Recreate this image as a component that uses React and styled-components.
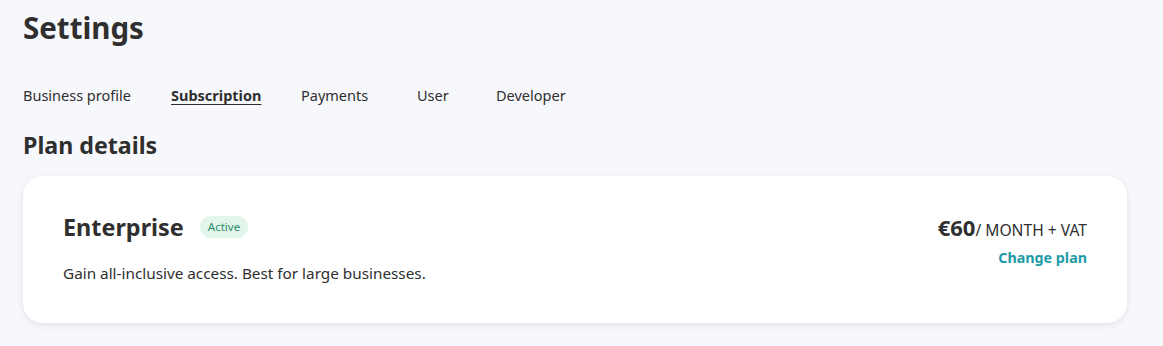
import styled, { createGlobalStyle } from "styled-components";

const GlobalStyle = createGlobalStyle`
  body {
    margin: 0;
    background: #f7f8fb;
    font-family: "Noto Sans", "Open Sans", sans-serif;
    color: #2f2f2f;
  }
`;

const Page = styled.div`
  padding: 8px 36px 24px 23px;
`;

const Title = styled.h1`
  margin: 0;
  font-size: 29.5px;
  font-weight: 700;
  line-height: 40px;
`;

const Tabs = styled.nav`
  display: flex;
  margin-top: 35px;
  height: 24px;
  align-items: center;
`;

const Tab = styled.a`
  width: ${(p) => p.$w}px;
  flex: none;
  font-size: 14.5px;
  color: #2f2f2f;
  font-weight: ${(p) => (p.$active ? 700 : 400)};
  text-decoration: ${(p) => (p.$active ? "underline" : "none")};
  text-underline-offset: 3px;
  cursor: pointer;
`;

const SectionTitle = styled.h2`
  margin: 22px 0 0;
  font-size: 23.2px;
  font-weight: 700;
  line-height: 32px;
`;

const Card = styled.section`
  margin-top: 15px;
  background: #fff;
  border-radius: 20px;
  box-shadow: 0 2px 6px rgba(30, 40, 70, 0.1);
  padding: 36px 40px 40px;
  display: flex;
  justify-content: space-between;
  align-items: flex-start;
`;

const PlanInfo = styled.div`
  display: flex;
  flex-direction: column;
  gap: 21px;
`;

const PlanHead = styled.div`
  display: flex;
  align-items: center;
  gap: 16px;
`;

const PlanName = styled.h3`
  margin: 0;
  font-size: 23.4px;
  font-weight: 700;
  line-height: 30px;
`;

const Badge = styled.span`
  background: #e2f6ec;
  color: #2b8a69;
  font-size: 11.5px;
  line-height: 22px;
  padding: 0 8px;
  border-radius: 11px;
`;

const Description = styled.p`
  margin: 0;
  font-size: 15.3px;
  line-height: 20px;
`;

const Pricing = styled.div`
  display: flex;
  flex-direction: column;
  align-items: flex-end;
  gap: 6px;
  padding-top: 3px;
`;

const Price = styled.div`
  font-size: 15.6px;
  line-height: 24px;
  strong {
    font-size: 22px;
    font-weight: 700;
  }
`;

const ChangeLink = styled.a`
  color: #1d9ba6;
  font-weight: 700;
  font-size: 14.3px;
  cursor: pointer;
`;

const tabs = [
  { label: "Business profile", w: 148 },
  { label: "Subscription", w: 130, active: true },
  { label: "Payments", w: 116 },
  { label: "User", w: 79 },
  { label: "Developer", w: 100 },
];

export default function App() {
  return (
    <>
      <GlobalStyle />
      <Page>
        <Title>Settings</Title>
        <Tabs>
          {tabs.map((t) => (
            <Tab key={t.label} $w={t.w} $active={t.active}>
              {t.label}
            </Tab>
          ))}
        </Tabs>
        <SectionTitle>Plan details</SectionTitle>
        <Card>
          <PlanInfo>
            <PlanHead>
              <PlanName>Enterprise</PlanName>
              <Badge>Active</Badge>
            </PlanHead>
            <Description>Gain all-inclusive access. Best for large businesses.</Description>
          </PlanInfo>
          <Pricing>
            <Price>
              <strong>€60</strong>/ MONTH + VAT
            </Price>
            <ChangeLink>Change plan</ChangeLink>
          </Pricing>
        </Card>
      </Page>
    </>
  );
}
